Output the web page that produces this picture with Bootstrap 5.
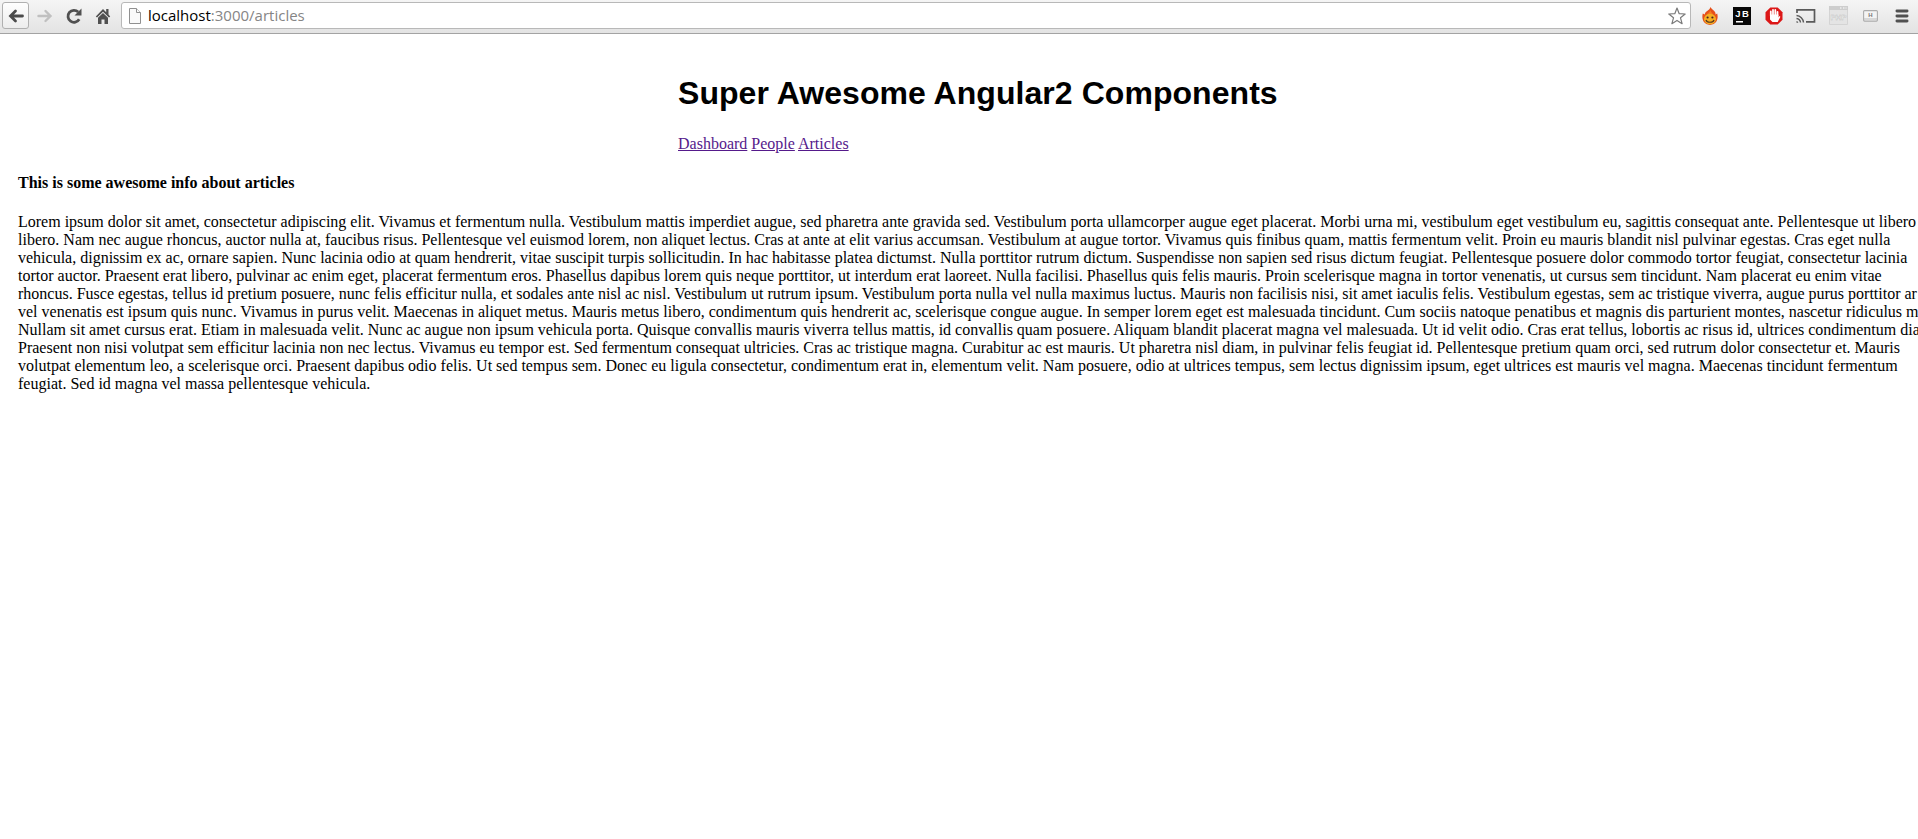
<!DOCTYPE html>
<html lang="en">
<head>
<meta charset="utf-8">
<title>Super Awesome Angular2 Components</title>
<link rel="stylesheet" href="https://cdn.jsdelivr.net/npm/bootstrap@5.3.0/dist/css/bootstrap.min.css">
<style>
body{font:16px/18px "Liberation Serif",serif;color:#000;background:#fff;overflow:hidden}
.toolbar{height:34px;background:linear-gradient(#f5f5f5,#e3e3e3);border-bottom:1px solid #a3a3a3;padding:2px 0 4px 2px}
.toolbar svg{display:block;flex:none}
.tool{width:26px;height:27px;margin-left:3px}
.back-btn{border:1px solid #b0b0b0;border-radius:3px;background:linear-gradient(#fefefe,#ededed);width:27px;margin-left:0}
.address{height:27px;border:1px solid #b8b8b8;border-radius:3px;margin-left:5px;padding:0 4px 0 7px;font:15px/24px "Open Sans",sans-serif}
.url{margin-left:7px;padding-bottom:2px}
.path{color:#858585}
.extensions{padding-left:3px;height:27px}
.ext{width:32px}
.site-head{margin-left:678px;padding-top:39px}
.site-head h1{font:bold 32px/40px "Liberation Sans",sans-serif;letter-spacing:.05px;margin:0;white-space:nowrap}
.links{margin-top:22px}
.links a{color:#551a8b}
article{margin:21px 0 0 18px}
article h4{font:bold 16px/18px "Liberation Serif",serif;margin:0 0 21px}
</style>
<script src="https://cdn.jsdelivr.net/npm/bootstrap@5.3.0/dist/js/bootstrap.bundle.min.js"></script>
</head>
<body>
<header class="toolbar d-flex align-items-start">
  <div class="tool back-btn d-flex align-items-center justify-content-center"><svg width="18" height="16" viewBox="0 0 18 16" fill="none" stroke="#4b4b4b" stroke-width="2.800" stroke-linecap="round"><path d="M15.500 8H4M8.500 3 3.500 8l5 5"/></svg></div>
  <div class="tool d-flex align-items-center justify-content-center"><svg width="18" height="16" viewBox="0 0 18 16" fill="none" stroke="#c0c0c0" stroke-width="2.400" stroke-linecap="round"><path d="M2.500 8H14M9.500 3l5 5-5 5"/></svg></div>
  <div class="tool d-flex align-items-center justify-content-center"><svg width="18" height="18" viewBox="0 0 18 18"><path d="M14.200 12.300A6 6 0 1 1 13.200 5" fill="none" stroke="#505050" stroke-width="2.800"/><path d="M16.500 1.500V8.500H9.500z" fill="#505050"/></svg></div>
  <div class="tool d-flex align-items-center justify-content-center"><svg width="16" height="18" viewBox="0 0 16 18" fill="#505050"><path d="M8 2 .8 9.500l1.200 1L8 4.800l6 5.700 1.200-1L13.500 7.500V2h-2.300v3.300z"/><path d="M8 6 3 10.800V17h3.500v-4.500h3V17H13v-6.200z"/></svg></div>
  <div class="address bg-white flex-grow-1 d-flex align-items-center">
    <svg width="12" height="16" viewBox="0 0 12 16" fill="#fafafa" stroke="#909090"><path d="M.5.5h7l4 4v11H.5z"/><path d="M7.500.5v4h4"/></svg>
    <span class="url flex-grow-1">localhost<span class="path">:3000/articles</span></span>
    <svg width="18" height="18" viewBox="0 0 18 18" fill="#fff" stroke="#7b7b7b" stroke-width="1.200" stroke-linejoin="round"><path d="m9 1 2.200 5.700 6 .3-4.700 3.800 1.600 5.900L9 13.400l-5.100 3.300 1.600-5.900L.8 7l6-.3z"/></svg>
  </div>
  <div class="extensions d-flex align-items-center">
    <div class="ext d-flex justify-content-center"><svg width="16" height="18" viewBox="0 0 16 18"><path d="M8.300 0C8 3.500 3 4 2.800 7.500L.8 6.500C-.3 10 .2 17.500 8 18c7.800-.5 8.300-8 7.200-11.500L13.500 7.500C14 4 10.500 3.500 8.300 0z" fill="#e6501a"/><path d="M8.500 3C8 6 4 6.500 4 10h8c0-3-3-4-3.500-7z" fill="#f47b20"/><ellipse cx="8" cy="12" rx="6" ry="5.300" fill="#f5ae22"/><circle cx="5.600" cy="10.500" r="1.100" fill="#422"/><circle cx="10.400" cy="10.500" r="1.100" fill="#422"/><path d="M4 13c1 3 7 3 8 0" fill="none" stroke="#532" stroke-width="1.200"/></svg></div>
    <div class="ext d-flex justify-content-center"><svg width="18" height="18" viewBox="0 0 18 18"><path fill="#080808" d="M0 0h18v18H0z"/><text x="2.300" y="10" textLength="13.500" fill="#fff" font-family="Liberation Sans" font-weight="bold" font-size="9.500">JB</text><path fill="#fff" d="M3 14h7v1.500H3z"/></svg></div>
    <div class="ext d-flex justify-content-center"><svg width="18" height="18" viewBox="0 0 18 18"><path d="M5.300.5h7.400l4.800 4.800v7.400l-4.800 4.800H5.300L.5 12.700V5.300z" fill="#dc1717"/><path d="M5.800 9V4.500M8 8V2.800M10.300 8V3M12.500 9V5" stroke="#fff" stroke-width="1.800" stroke-linecap="round"/><path d="M5 7.500h8.400v3l1-1.500 1 .8-2.700 5.200H7.500L5 12.500z" fill="#fff"/></svg></div>
    <div class="ext d-flex justify-content-center"><svg width="20" height="16" viewBox="0 0 20 16" fill="none" stroke="#5a5a5a" stroke-width="1.700"><path d="M1 5V1.800h17.500v12H10"/><path d="M.5 7.500a7.500 7.500 0 0 1 7 7M.5 10.500a4.500 4.500 0 0 1 4 4" stroke-width="1.400"/><path d="M.5 13a2 2 0 0 1 1.800 1.800H.5z" fill="#5a5a5a" stroke="none"/></svg></div>
    <div class="ext d-flex justify-content-center"><svg width="19" height="19" viewBox="0 0 19 19"><path fill="#e4e4e4" stroke="#d4d4d4" d="M.5.5h18v18H.5z"/><path fill="#cdcdcd" d="M0 0h19v4H0z"/><path d="M11 2h1.500M14 2h1.500M16.500 2h1" stroke="#fff"/><text x="1.500" y="13.500" textLength="16" fill="#f4f4f4" stroke="#bdbdbd" stroke-width=".4" font-family="Liberation Sans" font-weight="bold" font-size="8">PHP</text></svg></div>
    <div class="ext d-flex justify-content-center"><svg width="15" height="12" viewBox="0 0 15 12"><rect x=".6" y=".6" width="13.800" height="10.500" rx="1" fill="#f4f4f4" stroke="#ababab" stroke-width="1.100"/><path d="M1 9h13" stroke="#bbb"/><text x="5.300" y="7" font-family="Liberation Sans" font-weight="bold" font-size="6" fill="#777">H</text></svg></div>
    <div class="ext d-flex justify-content-center"><svg width="14" height="14" viewBox="0 0 14 14" stroke="#505050" stroke-width="2.800" stroke-linecap="round"><path d="M1.900 2h10.200M1.900 7h10.200M1.900 12h10.200"/></svg></div>
  </div>
</header>
<main>
  <div class="site-head">
    <h1>Super Awesome Angular2 Components</h1>
    <nav class="links"><a href="#">Dashboard</a> <a href="#">People</a> <a href="#">Articles</a></nav>
  </div>
  <article class="text-nowrap">
    <h4>This is some awesome info about articles</h4>
    <div>Lorem ipsum dolor sit amet, consectetur adipiscing elit. Vivamus et fermentum nulla. Vestibulum mattis imperdiet augue, sed pharetra ante gravida sed. Vestibulum porta ullamcorper augue eget placerat. Morbi urna mi, vestibulum eget vestibulum eu, sagittis consequat ante. Pellentesque ut libero<br>
    libero. Nam nec augue rhoncus, auctor nulla at, faucibus risus. Pellentesque vel euismod lorem, non aliquet lectus. Cras at ante at elit varius accumsan. Vestibulum at augue tortor. Vivamus quis finibus quam, mattis fermentum velit. Proin eu mauris blandit nisl pulvinar egestas. Cras eget nulla<br>
    vehicula, dignissim ex ac, ornare sapien. Nunc lacinia odio at quam hendrerit, vitae suscipit turpis sollicitudin. In hac habitasse platea dictumst. Nulla porttitor rutrum dictum. Suspendisse non sapien sed risus dictum feugiat. Pellentesque posuere dolor commodo tortor feugiat, consectetur lacinia<br>
    tortor auctor. Praesent erat libero, pulvinar ac enim eget, placerat fermentum eros. Phasellus dapibus lorem quis neque porttitor, ut interdum erat laoreet. Nulla facilisi. Phasellus quis felis mauris. Proin scelerisque magna in tortor venenatis, ut cursus sem tincidunt. Nam placerat eu enim vitae<br>
    rhoncus. Fusce egestas, tellus id pretium posuere, nunc felis efficitur nulla, et sodales ante nisl ac nisl. Vestibulum ut rutrum ipsum. Vestibulum porta nulla vel nulla maximus luctus. Mauris non facilisis nisi, sit amet iaculis felis. Vestibulum egestas, sem ac tristique viverra, augue purus porttitor ar<br>
    vel venenatis est ipsum quis nunc. Vivamus in purus velit. Maecenas in aliquet metus. Mauris metus libero, condimentum quis hendrerit ac, scelerisque congue augue. In semper lorem eget est malesuada tincidunt. Cum sociis natoque penatibus et magnis dis parturient montes, nascetur ridiculus m<br>
    Nullam sit amet cursus erat. Etiam in malesuada velit. Nunc ac augue non ipsum vehicula porta. Quisque convallis mauris viverra tellus mattis, id convallis quam posuere. Aliquam blandit placerat magna vel malesuada. Ut id velit odio. Cras erat tellus, lobortis ac risus id, ultrices condimentum dia<br>
    Praesent non nisi volutpat sem efficitur lacinia non nec lectus. Vivamus eu tempor est. Sed fermentum consequat ultricies. Cras ac tristique magna. Curabitur ac est mauris. Ut pharetra nisl diam, in pulvinar felis feugiat id. Pellentesque pretium quam orci, sed rutrum dolor consectetur et. Mauris<br>
    volutpat elementum leo, a scelerisque orci. Praesent dapibus odio felis. Ut sed tempus sem. Donec eu ligula consectetur, condimentum erat in, elementum velit. Nam posuere, odio at ultrices tempus, sem lectus dignissim ipsum, eget ultrices est mauris vel magna. Maecenas tincidunt fermentum<br>
    feugiat. Sed id magna vel massa pellentesque vehicula.</div>
  </article>
</main>
</body>
</html>
